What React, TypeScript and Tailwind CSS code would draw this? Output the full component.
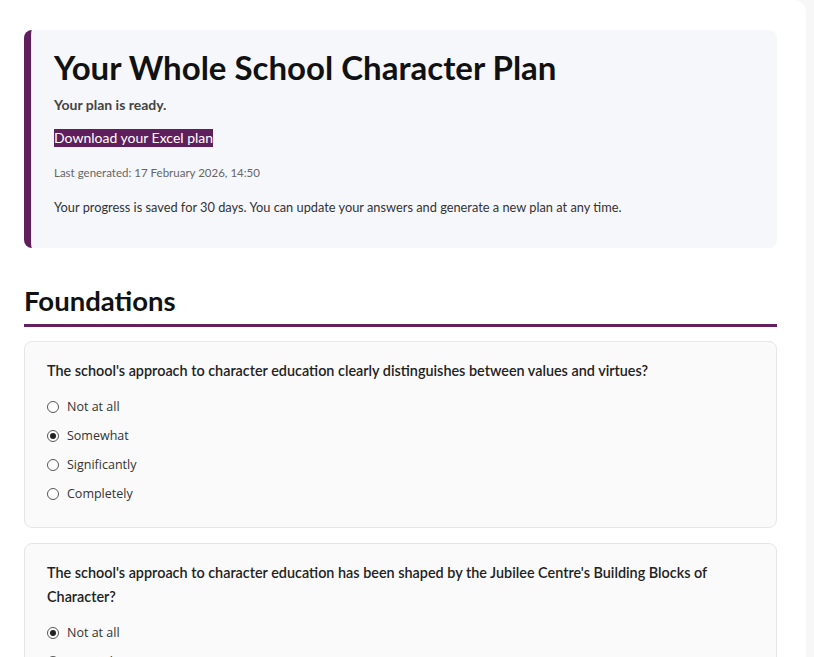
import React from 'react';

const heading = { fontFamily: 'Lato, "Noto Sans", sans-serif' };
const system = { fontFamily: '"Open Sans", "Noto Sans", sans-serif' };

interface Question {
  text: string;
  options: string[];
  selected: number;
}

const questions: Question[] = [
  {
    text: "The school's approach to character education clearly distinguishes between values and virtues?",
    options: ['Not at all', 'Somewhat', 'Significantly', 'Completely'],
    selected: 1,
  },
  {
    text: "The school's approach to character education has been shaped by the Jubilee Centre's Building Blocks of Character?",
    options: ['Not at all', 'Somewhat', 'Significantly', 'Completely'],
    selected: 0,
  },
];

function Radio({ checked }: { checked: boolean }) {
  return (
    <span className="flex h-[12px] w-[12px] items-center justify-center rounded-full border border-[#555] bg-white">
      {checked && <span className="h-[6px] w-[6px] rounded-full bg-[#222]" />}
    </span>
  );
}

function QuestionCard({ q }: { q: Question }) {
  return (
    <div className="rounded-lg border border-[#e6e6e6] bg-[#fafafa] px-[22px] pt-[17px] pb-[19px]">
      <p className="text-[14.4px] font-semibold leading-6 text-[#222]" style={heading}>
        {q.text}
      </p>
      <div className="mt-[9px] flex flex-col">
        {q.options.map((opt, i) => (
          <label key={opt} className="flex h-[29px] items-center gap-[8px]">
            <Radio checked={i === q.selected} />
            <span className="text-[12.5px] text-[#333]" style={system}>
              {opt}
            </span>
          </label>
        ))}
      </div>
    </div>
  );
}

export default function App() {
  return (
    <div className="flex h-[657px] overflow-hidden bg-[#f7f7f8]">
      <div className="w-[806px] shrink-0 rounded-tr-xl bg-white pt-[30px] pr-[29px] pl-6" style={heading}>
        {/* Plan summary */}
        <div className="rounded-lg border-l-[7px] border-[#5f1f5c] bg-[#f6f7fb] pt-[17px] pb-[31px] pl-[23px]">
          <h1 className="text-[33px] font-bold leading-[40px] text-[#111]">
            Your Whole School Character Plan
          </h1>
          <p className="mt-[7px] text-[14px] font-bold text-[#444]">Your plan is ready.</p>
          <a className="mt-[14px] inline-block bg-[#5f1f5c] text-[14px] leading-[18px] text-white">
            Download your Excel plan
          </a>
          <p className="mt-[15px] text-[11.5px] text-[#666]">
            Last generated: 17 February 2026, 14:50
          </p>
          <p className="mt-[17px] text-[12.8px] text-[#333]">
            Your progress is saved for 30 days. You can update your answers and generate a new plan at any time.
          </p>
        </div>

        {/* Foundations */}
        <h2 className="mt-[36px] border-b-[3px] border-[#65205f] pb-[6px] text-[27.5px] font-bold leading-[34px] text-[#111]">
          Foundations
        </h2>

        <div className="mt-[14px] flex flex-col gap-[15px]">
          {questions.map((q) => (
            <QuestionCard key={q.text} q={q} />
          ))}
        </div>
      </div>
    </div>
  );
}
